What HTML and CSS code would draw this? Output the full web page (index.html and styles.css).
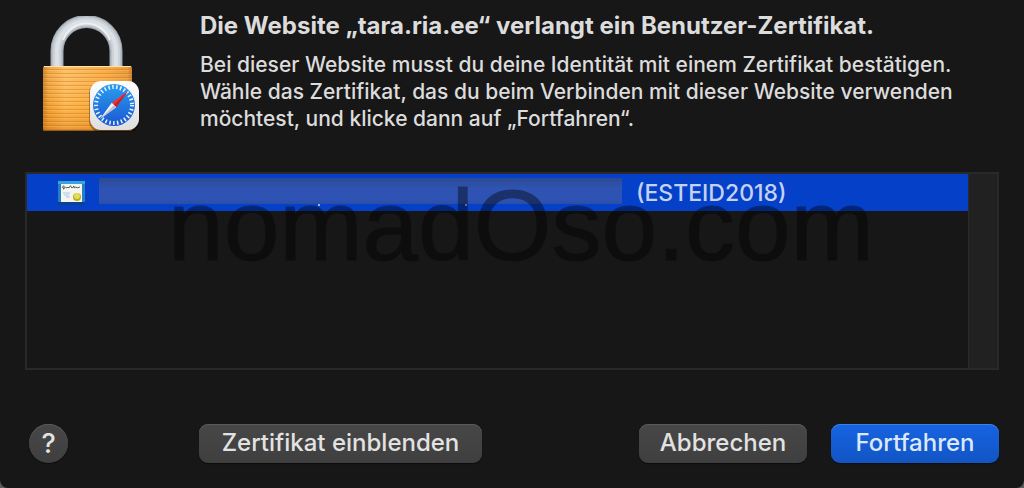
FILE: index.html
```
<!DOCTYPE html>
<html lang="de">
	<head>
		<meta charset="utf-8">
		<meta name="viewport" content="width=device-width, initial-scale=1">
		<title>Benutzer-Zertifikat</title>
		<link rel="stylesheet" href="styles.css">
	</head>
	<body>
		<main class="dialog">
			<header class="intro">
				<svg class="lock" viewBox="0 0 104 120" aria-hidden="true">
					<defs>
						<linearGradient id="gold" x1="0" x2="1" y1="0" y2="0">
							<stop offset="0" stop-color="#c77a22"/>
							<stop offset=".06" stop-color="#f0a03a"/>
							<stop offset=".25" stop-color="#ffbc5c"/>
							<stop offset=".7" stop-color="#f9a83e"/>
							<stop offset=".95" stop-color="#e8962f"/>
							<stop offset="1" stop-color="#c27420"/>
						</linearGradient>
						<linearGradient id="shade" x1="0" x2="0" y1="0" y2="1">
							<stop offset="0" stop-color="#fff" stop-opacity=".05"/>
							<stop offset=".6" stop-color="#f90" stop-opacity=".15"/>
							<stop offset="1" stop-color="#c60" stop-opacity=".4"/>
						</linearGradient>
						<linearGradient id="blue" x1="0" x2="0" y1="0" y2="1">
							<stop offset="0" stop-color="#2a9df0"/>
							<stop offset="1" stop-color="#1a57d0"/>
						</linearGradient>
						<linearGradient id="tile" x1="0" x2="0" y1="0" y2="1">
							<stop offset="0" stop-color="#fff"/>
							<stop offset="1" stop-color="#dedede"/>
						</linearGradient>
						<pattern id="lines" width="8" height="4" patternUnits="userSpaceOnUse">
							<rect y="1" width="8" height="1" fill="#b8741e" opacity=".4"/>
							<rect y="2" width="8" height="1" fill="#ffe0a0" opacity=".2"/>
						</pattern>
					</defs>
					<!-- shackle -->
					<g fill="none">
						<path d="M17 56V35a29.500 29.500 0 0 1 59 0v21" stroke="#9aa1a9" stroke-width="13"/>
						<path d="M17 56V35a29.500 29.500 0 0 1 59 0v21" stroke="#b9c0c8" stroke-width="11"/>
						<path d="M17 56V35a29.500 29.500 0 0 1 59 0v21" stroke="#ccd2d9" stroke-width="8"/>
						<path d="M17 56V35a29.500 29.500 0 0 1 59 0v21" stroke="#dce1e6" stroke-width="4"/>
						<path d="M23 24a25 25 0 0 1 47 0" stroke="#eef1f4" stroke-width="2"/>
					</g>
					<!-- body -->
					<rect x="3" y="50" width="89" height="65" rx="2" fill="url(#gold)"/>
					<rect x="3" y="50" width="89" height="65" rx="2" fill="url(#shade)"/>
					<rect x="3" y="52" width="89" height="62" fill="url(#lines)"/>
					<rect x="4" y="50" width="87" height="1" fill="#ffe3ae"/>
					<rect x="4" y="114" width="87" height="1" fill="#9a5a18"/>
					<!-- compass -->
					<rect x="49" y="66" width="51" height="50" rx="11" fill="#000" opacity=".3"/>
					<rect x="50" y="65" width="49" height="49" rx="11" fill="url(#tile)"/>
					<circle cx="74" cy="89" r="21" fill="url(#blue)"/>
					<circle cx="74" cy="89" r="18" fill="none" stroke="#e8f3ff" stroke-width="4" stroke-dasharray="1.5 2.427"/>
					<path d="M88 75L71.800 86.800 76.200 91.200z" fill="#f0323c"/>
					<path d="M88 75L74 89 76.200 91.200z" fill="#c4202c"/>
					<path d="M60 103L71.800 86.800 76.200 91.200z" fill="#f6f6f6"/>
					<path d="M60 103L74 89 76.200 91.200z" fill="#b9c0c8"/>
				</svg>
				<div class="message">
					<h1>Die Website „tara.ria.ee“ verlangt ein Benutzer-Zertifikat.</h1>
					<p>Bei dieser Website musst du deine Identität mit einem Zertifikat bestätigen. Wähle das Zertifikat, das du beim Verbinden mit dieser Website verwenden möchtest, und klicke dann auf „Fortfahren“.</p>
				</div>
			</header>

			<section class="certs">
				<ul class="list" role="listbox" aria-label="Zertifikate">
					<li class="cert" role="option" aria-selected="true" tabindex="0">
						<svg class="cert-icon" viewBox="0 0 27 24" aria-hidden="true">
							<rect width="27" height="24" fill="#123f8c"/>
							<path d="M0 0h27v21H0z" fill="#247fc4"/>
							<path d="M0 0h27v3H0z" fill="#36a5dc"/>
							<path d="M3 3h21v18H3z" fill="#f4f5f1"/>
							<path d="M4 7q2-4 2-1t-1 2q3-3 4-1l1-1 1 1q2-4 2-1l1 1 2-2v2l2-1 1 1 3-1" fill="none" stroke="#555" stroke-width=".9"/>
							<path d="M5 12h7M6 14h5M8 16h4" stroke="#a9c8ea"/>
							<circle cx="19" cy="16" r="4" fill="#b9ad20"/>
							<circle cx="19" cy="15" r="3" fill="#e3dc58"/>
						</svg>
						<span class="redacted"></span>
						<span>(ESTEID2018)</span>
					</li>
				</ul>
				<div class="scrollbar"></div>
				<div class="watermark">nomadOso.com</div>
			</section>

			<footer class="actions">
				<button class="help" type="button" aria-label="Hilfe">?</button>
				<button class="butt show" type="button">Zertifikat einblenden</button>
				<button class="butt" type="button">Abbrechen</button>
				<button class="butt primary" type="button">Fortfahren</button>
			</footer>
		</main>
	</body>
</html>
```
FILE: styles.css
```
* {
	box-sizing:border-box;
}
body {
	margin:0;
	background:#5c5c5e;
	color:#dcdcdc;
	font-family:Inter, "Liberation Sans", sans-serif;
	font-size:21px;
	font-weight:500;
}
.dialog {
	display:flex;
	flex-direction:column;
	min-height:100vh;
	padding:11px 25px 25px;
	background:#181717;
	border-radius:0 0 8px 8px;
}
.intro {
	display:flex;
	gap:56px;
	padding-left:15px;
}
.lock {
	flex:none;
	width:104px;
	height:120px;
	margin-top:5px;
}
.message {
	max-width:780px;
}
h1 {
	margin:0 0 10px;
	font-size:24px;
	line-height:30px;
	font-weight:700;
}
p {
	margin:0;
	line-height:27px;
}
.certs {
	position:relative;
	display:flex;
	flex:1;
	min-height:120px;
	margin:36px 0 54px;
	border:2px solid #292929;
}
.list {
	flex:1;
	margin:0;
	padding:0;
	list-style:none;
}
.cert {
	display:flex;
	align-items:center;
	height:37px;
	padding-left:31px;
	/* the two specks are descenders peeking out below the redacted name */
	background:
		linear-gradient(#9fb4e6, #9fb4e6) 291px 30px / 2px 2px no-repeat,
		linear-gradient(#9fb4e6, #9fb4e6) 438px 30px / 2px 2px no-repeat,
		#0440c8;
	color:#c3d2f3;
	font-size:23px;
}
.cert-icon {
	flex:none;
	width:27px;
	height:24px;
}
.redacted {
	flex:0 1 523px;
	align-self:flex-start;
	height:26px;
	margin:4px 14px 0;
	background:linear-gradient(#2c4a93, #2e53b2 40%, #2e53b4 80%, #2b4ea8);
}
.scrollbar {
	width:29px;
	border-left:1px solid #2b2b2b;
	background:#212121;
}
.watermark {
	position:absolute;
	top:1px;
	left:18px;
	right:0;
	opacity:.4;
	color:#000;
	font-family:"Liberation Sans", Arial, sans-serif;
	font-size:100px;
	font-weight:400;
	line-height:100px;
	text-align:center;
	-webkit-text-stroke:1px #000;
	pointer-events:none;
}
.actions {
	display:flex;
	align-items:center;
	padding-left:4px;
}
button {
	height:39px;
	border:0;
	background:linear-gradient(#484747, #403f3f);
	box-shadow:inset 0 1px #5a5a5a, 0 1px 1px #0c0c0c;
	color:#e2e2e2;
	font-family:inherit;
	font-size:24px;
	font-weight:500;
	line-height:36px;
}
.help {
	width:39px;
	padding:0;
	border-radius:50%;
	font-size:27px;
}
.butt {
	min-width:168px;
	margin-left:24px;
	padding:0 20px 2px;
	border-radius:9px;
}
.show {
	min-width:283px;
	margin-left:131px;
	margin-right:auto;
}
.primary {
	background:linear-gradient(#1763e2, #1255c4);
	box-shadow:inset 0 1px #3b7fe8, 0 1px 1px #0c0c0c;
	color:#dce8fc;
}
```
